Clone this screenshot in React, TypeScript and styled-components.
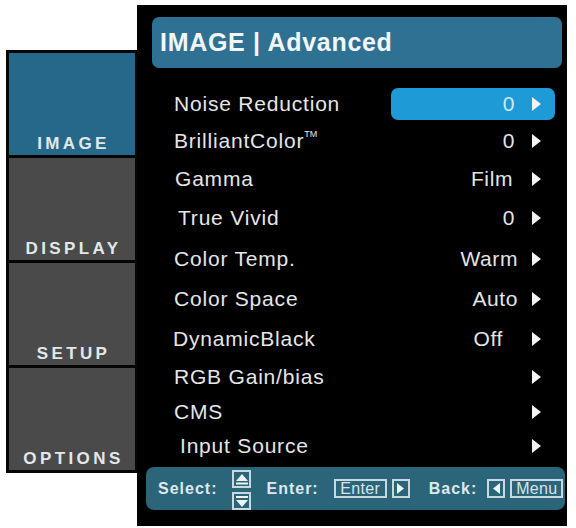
import React from "react";
import styled, { createGlobalStyle } from "styled-components";

const Global = createGlobalStyle`
  html, body {
    margin: 0;
    padding: 0;
    background: #ffffff;
  }
  body {
    font-family: "Liberation Sans", Arial, sans-serif;
  }
`;

const Screen = styled.div`
  display: flex;
  align-items: flex-start;
  width: 576px;
  height: 528px;
  box-sizing: border-box;
  padding: 5px 0 0 6px;
`;

/* ---------- left tab column ---------- */

const Sidebar = styled.nav`
  margin-top: 45px;
  width: 131px;
  box-sizing: border-box;
  border: 3px solid #050505;
  border-right-width: 2px;
  background: #050505;
  display: flex;
  flex-direction: column;
  gap: 3px;
`;

const Tab = styled.div<{ $active?: boolean }>`
  height: 102px;
  display: flex;
  align-items: flex-end;
  justify-content: center;
  padding: 0 0 3px 3px;
  box-sizing: border-box;
  background: ${(p) => (p.$active ? "#25688a" : "#4a4a4a")};
  color: #e2e8ea;
  font-weight: 700;
  font-size: 17px;
  line-height: 17px;
  letter-spacing: 3.4px;
`;

/* ---------- main menu panel ---------- */

const Panel = styled.section`
  width: 430px;
  height: 521px;
  box-sizing: border-box;
  background: #000000;
  padding: 12px 2px 16px 9px;
  display: flex;
  flex-direction: column;
`;

const TitleBar = styled.header`
  height: 51px;
  margin: 0 3px 0 6px;
  border-radius: 7px;
  background: #2e7192;
  display: flex;
  align-items: center;
  padding-left: 8px;
  color: #f2f6f8;
  font-weight: 700;
  font-size: 25px;
  letter-spacing: 0.7px;
`;

const List = styled.div`
  margin-top: 18px;
  display: flex;
  flex-direction: column;
`;

const Row = styled.div<{ $h: number }>`
  height: ${(p) => p.$h}px;
  display: flex;
  align-items: center;
`;

const Label = styled.span<{ $indent: number }>`
  flex: 1;
  padding-left: ${(p) => 28 + p.$indent}px;
  color: #e6e6e6;
  font-size: 21px;
  letter-spacing: 0.8px;
  white-space: nowrap;
`;

const Sup = styled.sup`
  font-size: 9px;
  letter-spacing: 0;
  position: relative;
  top: -3px;
`;

const ValueCell = styled.div<{ $selected?: boolean }>`
  width: 164px;
  height: 32px;
  margin-right: 10px;
  box-sizing: border-box;
  padding-right: 14px;
  border-radius: 7px;
  background: ${(p) => (p.$selected ? "#1e9ad6" : "transparent")};
  display: flex;
  align-items: center;
  justify-content: flex-end;
`;

const Value = styled.span<{ $gap: number; $selected?: boolean }>`
  margin-right: ${(p) => p.$gap}px;
  color: ${(p) => (p.$selected ? "#c9ecfb" : "#e4e4e4")};
  font-size: 21px;
  letter-spacing: 0.6px;
`;

const ArrowIcon = ({ color = "#f4f4f4" }: { color?: string }) => (
  <svg width="9" height="14" viewBox="0 0 9 14">
    <polygon points="0,0 9,7 0,14" fill={color} />
  </svg>
);

/* ---------- help footer ---------- */

const Footer = styled.footer`
  margin-top: 5px;
  height: 43px;
  border-radius: 8px;
  background: #2b6579;
  display: flex;
  align-items: center;
  padding-left: 12px;
  gap: 15px;
`;

const Hint = styled.div<{ $gap: number; $push?: number }>`
  display: flex;
  align-items: center;
  gap: ${(p) => p.$gap}px;
  margin-left: ${(p) => p.$push ?? 0}px;
`;

const HintLabel = styled.span`
  color: #dfe8ec;
  font-weight: 700;
  font-size: 16px;
  letter-spacing: 1px;
`;

const Keys = styled.div`
  display: flex;
  align-items: center;
  gap: 5px;
`;

const KeyStack = styled.div`
  display: flex;
  flex-direction: column;
  gap: 4px;
  margin-top: 3px;
`;

const KeyCap = styled.div<{ $w: number; $h?: number }>`
  width: ${(p) => p.$w}px;
  height: ${(p) => p.$h ?? 19}px;
  box-sizing: border-box;
  border: 2px solid #c9d9df;
  display: flex;
  align-items: center;
  justify-content: center;
  color: #d7e4e9;
  font-size: 16px;
  letter-spacing: 0.3px;
`;

const KeyGlyph = ({ dir }: { dir: "up" | "down" | "left" | "right" }) => {
  if (dir === "up")
    return (
      <svg width="12" height="11" viewBox="0 0 12 11">
        <polygon points="6,0 12,7 0,7" fill="#eef4f6" />
        <rect x="0" y="8.5" width="12" height="2" fill="#eef4f6" />
      </svg>
    );
  if (dir === "down")
    return (
      <svg width="12" height="11" viewBox="0 0 12 11">
        <rect x="0" y="0" width="12" height="2" fill="#eef4f6" />
        <polygon points="0,4 12,4 6,11" fill="#eef4f6" />
      </svg>
    );
  if (dir === "right")
    return (
      <svg width="7" height="11" viewBox="0 0 7 11">
        <polygon points="0,0 7,5.5 0,11" fill="#eef4f6" />
      </svg>
    );
  return (
    <svg width="7" height="11" viewBox="0 0 7 11">
      <polygon points="7,0 0,5.5 7,11" fill="#eef4f6" />
    </svg>
  );
};

type Item = {
  label: React.ReactNode;
  value?: string;
  h: number;
  indent: number;
  gap: number;
  selected?: boolean;
};

const items: Item[] = [
  { label: "Noise Reduction", value: "0", h: 35, indent: 0, gap: 17, selected: true },
  {
    label: (
      <>
        BrilliantColor<Sup>TM</Sup>
      </>
    ),
    value: "0",
    h: 39,
    indent: 0,
    gap: 17,
  },
  { label: "Gamma", value: "Film", h: 38, indent: 1, gap: 19 },
  { label: "True Vivid", value: "0", h: 40, indent: 4, gap: 17 },
  { label: "Color Temp.", value: "Warm", h: 41, indent: 0, gap: 14 },
  { label: "Color Space", value: "Auto", h: 40, indent: 0, gap: 14 },
  { label: "DynamicBlack", value: "Off", h: 40, indent: -1, gap: 29 },
  { label: "RGB Gain/bias", h: 36, indent: 0, gap: 0 },
  { label: "CMS", h: 34, indent: 0, gap: 0 },
  { label: "Input Source", h: 33, indent: 6, gap: 0 },
];

const tabs = ["IMAGE", "DISPLAY", "SETUP", "OPTIONS"];

export default function App() {
  return (
    <>
      <Global />
      <Screen>
        <Sidebar>
          {tabs.map((t, i) => (
            <Tab key={t} $active={i === 0}>
              {t}
            </Tab>
          ))}
        </Sidebar>
        <Panel>
          <TitleBar>IMAGE | Advanced</TitleBar>
          <List>
            {items.map((it, i) => (
              <Row key={i} $h={it.h}>
                <Label $indent={it.indent}>{it.label}</Label>
                <ValueCell $selected={it.selected}>
                  {it.value && (
                    <Value $gap={it.gap} $selected={it.selected}>
                      {it.value}
                    </Value>
                  )}
                  <ArrowIcon />
                </ValueCell>
              </Row>
            ))}
          </List>
          <Footer>
            <Hint $gap={15}>
              <HintLabel>Select:</HintLabel>
              <KeyStack>
                <KeyCap $w={19} $h={18}>
                  <KeyGlyph dir="up" />
                </KeyCap>
                <KeyCap $w={19} $h={18}>
                  <KeyGlyph dir="down" />
                </KeyCap>
              </KeyStack>
            </Hint>
            <Hint $gap={15}>
              <HintLabel>Enter:</HintLabel>
              <Keys>
                <KeyCap $w={53}>Enter</KeyCap>
                <KeyCap $w={18}>
                  <KeyGlyph dir="right" />
                </KeyCap>
              </Keys>
            </Hint>
            <Hint $gap={10} $push={4}>
              <HintLabel>Back:</HintLabel>
              <Keys>
                <KeyCap $w={18}>
                  <KeyGlyph dir="left" />
                </KeyCap>
                <KeyCap $w={53}>Menu</KeyCap>
              </Keys>
            </Hint>
          </Footer>
        </Panel>
      </Screen>
    </>
  );
}
